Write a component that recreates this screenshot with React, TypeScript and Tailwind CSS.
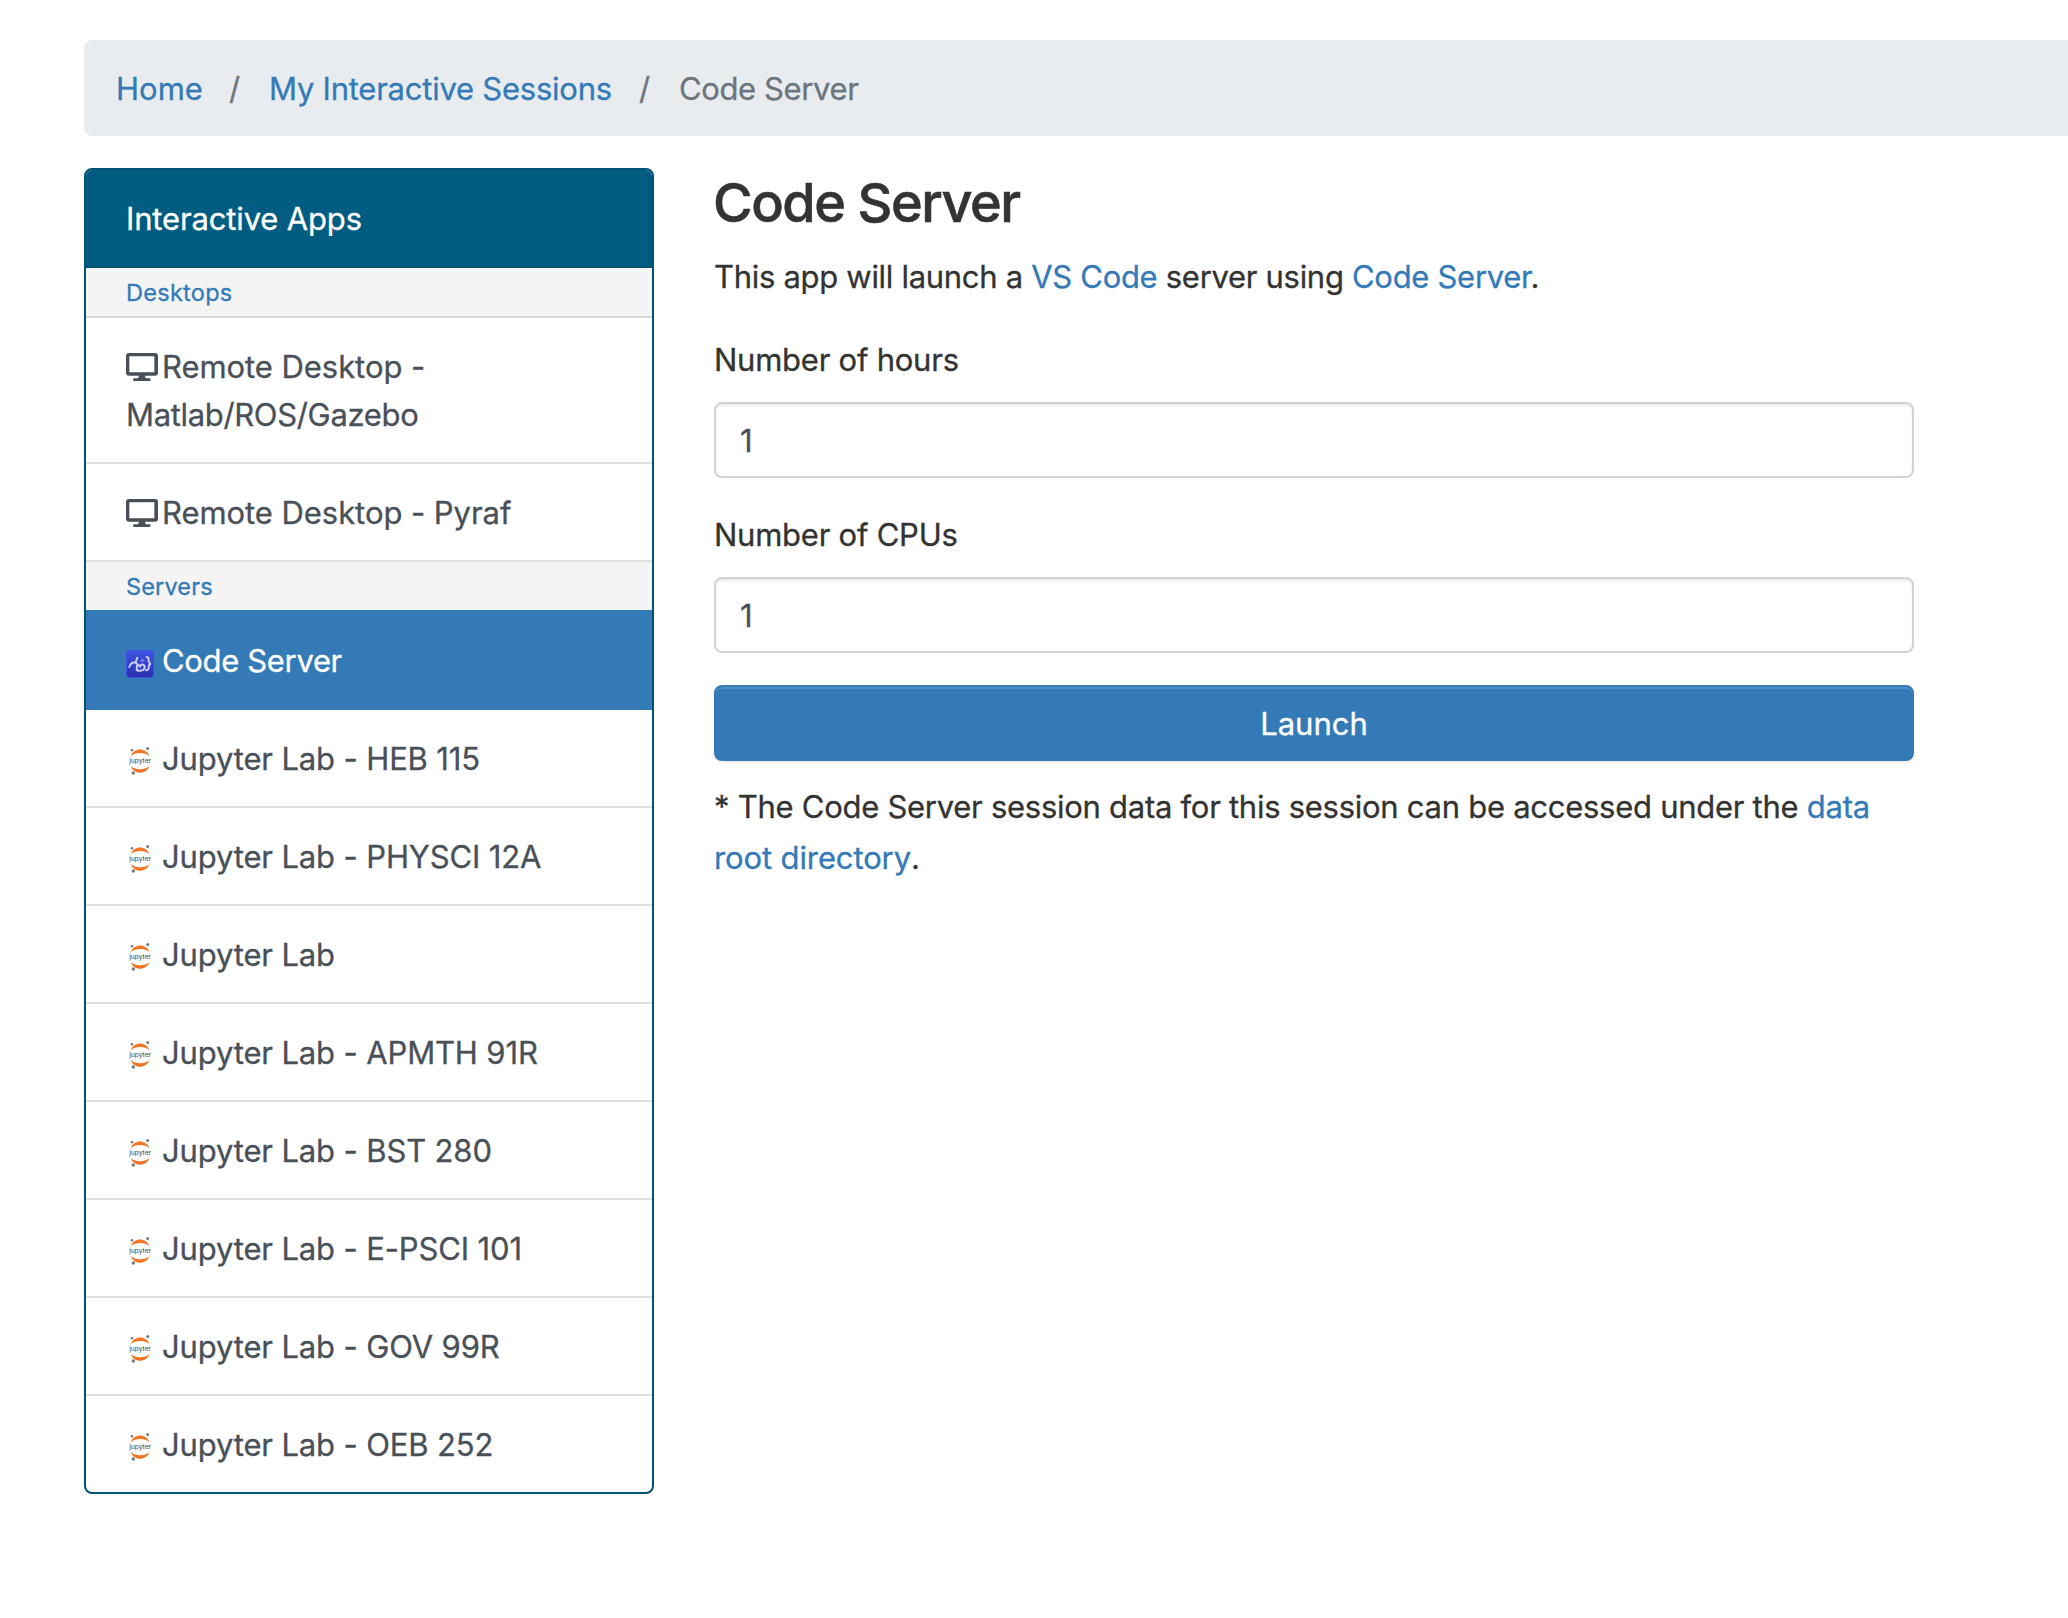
import React from "react";

function MonitorIcon() {
  return (
    <svg viewBox="18 25 96 84" className="mr-1 inline-block h-7 w-8 align-[-3px]" fill="currentColor">
      <path
        fillRule="evenodd"
        d="M27 25H105Q114 25 114 34V84Q114 93 105 93H75L77 101H88Q92 101 92 105Q92 109 88 109H43Q39 109 39 105Q39 101 43 101H54L57 93H27Q18 93 18 84V34Q18 25 27 25ZM28 35V83H103V35Z"
      />
    </svg>
  );
}

function CodeIcon() {
  return (
    <svg viewBox="0 0 84 84" className="h-7 w-7 shrink-0 translate-y-[3px]">
      <defs>
        <linearGradient id="codeBg" x1="0" y1="0" x2="0" y2="1">
          <stop offset="0" stopColor="#3f55e6" />
          <stop offset="0.5" stopColor="#3640cb" />
          <stop offset="1" stopColor="#2c2fae" />
        </linearGradient>
      </defs>
      <rect x="1.5" y="1.5" width="81" height="81" rx="10" fill="url(#codeBg)" stroke="#4552e2" strokeWidth="3" />
      <g fill="none" stroke="#c9ccf5" strokeWidth="6" strokeLinecap="round" strokeLinejoin="round">
        <path d="M10 51C13 41 20 36 29 38L43 50" />
        <path d="M29 37L34 23" />
        <path d="M33 47L32 60C40 64 54 63 56 53C57 44 46 40 41 48" />
        <path d="M62 21C69 21 68 28 68 33C68 38 73 41 73 42C69 44 68 47 68 52C68 59 67 61 60 61" />
      </g>
      <path d="M49 23L52 29L58 31L52 34L49 39L46 34L41 31L46 29Z" fill="#7480e8" />
    </svg>
  );
}

function JupyterIcon() {
  return (
    <svg viewBox="0 0 90 90" className="h-[30px] w-[30px] shrink-0 translate-y-[3px]">
      <g fill="#f37626">
        <path d="M15 28C21 1 63 1 70 28C57 15 28 15 15 28Z" />
        <path d="M15 57C21 84 63 84 70 57C57 70 28 70 15 57Z" />
      </g>
      <g fill="#77787b">
        <circle cx="18" cy="10" r="3.8" />
        <circle cx="65" cy="4.5" r="4.5" />
        <circle cx="22" cy="78" r="5.2" />
      </g>
      <text
        x="42.5"
        y="49"
        textAnchor="middle"
        textLength="66"
        lengthAdjust="spacingAndGlyphs"
        fontSize="20"
        fill="#3c3c3c"
        className="font-['Inter',sans-serif] tracking-normal"
      >
        jupyter
      </text>
    </svg>
  );
}

const labs = [
  "Jupyter Lab - HEB 115",
  "Jupyter Lab - PHYSCI 12A",
  "Jupyter Lab",
  "Jupyter Lab - APMTH 91R",
  "Jupyter Lab - BST 280",
  "Jupyter Lab - E-PSCI 101",
  "Jupyter Lab - GOV 99R",
  "Jupyter Lab - OEB 252",
];

function Field({ label }: { label: string }) {
  return (
    <label className="mb-8 block">
      <span className="block h-[51px] leading-[50px] tracking-[-0.24px]">{label}</span>
      <input
        defaultValue="1"
        className="mt-4 block h-[76px] w-full rounded-lg border-2 border-[#ced4da] bg-white px-6 text-[#495057] shadow-[inset_0_2px_2px_rgba(0,0,0,0.075)] outline-none"
      />
    </label>
  );
}

export default function App() {
  return (
    <div className="min-h-[1618px] w-full overflow-hidden bg-white pl-[84px] pt-10 font-['Inter',sans-serif] text-[31px] leading-[48px] text-[#333] [-webkit-text-stroke-width:0.3px]">
      <nav className="flex h-24 items-center whitespace-nowrap rounded-l-lg bg-[#e9ecef] pl-8 pt-0.5 text-[#6c757d]">
        <a className="w-[113px] text-[#337ab7]">Home</a>
        <span className="w-10">/</span>
        <a className="w-[370px] tracking-[-0.24px] text-[#337ab7]">My Interactive Sessions</a>
        <span className="w-10">/</span>
        <span className="tracking-[-0.38px]">Code Server</span>
      </nav>

      <div className="mt-8 flex items-start">
        <aside className="w-[570px] shrink-0 overflow-hidden rounded-lg border-2 border-[#005273] text-[#495057]">
          <div className="h-[98px] border-b-2 border-[#005273] bg-[#005c81] pl-10 pt-[25px] tracking-[-0.15px] text-white">
            Interactive Apps
          </div>
          <div className="h-[50px] border-b-2 border-[#d7d7d7] bg-[#f4f4f4] pl-10 pt-px text-[23.5px] tracking-[0.28px] text-[#337ab7]">
            Desktops
          </div>
          <div className="h-[146px] border-b-2 border-[#dfdfdf] pl-10 pt-[25px] tracking-[-0.06px]">
            <MonitorIcon />
            Remote Desktop -<span className="block tracking-[-0.34px]">Matlab/ROS/Gazebo</span>
          </div>
          <div className="h-[98px] border-b-2 border-[#dfdfdf] pl-10 pt-[25px] tracking-[-0.06px]">
            <MonitorIcon />
            Remote Desktop - Pyraf
          </div>
          <div className="h-12 bg-[#f4f4f4] pl-10 pt-px text-[23.5px] tracking-[0.15px] text-[#337ab7]">Servers</div>
          <div className="flex h-[100px] items-center gap-2 bg-[#337ab7] pl-10 pt-0.5 tracking-[-0.34px] text-white">
            <CodeIcon />
            Code Server
          </div>
          {labs.map((name) => (
            <div
              key={name}
              className="flex h-[98px] items-center gap-1.5 border-b-2 border-[#dfdfdf] pl-10 pt-0.5 tracking-[-0.14px] last:h-24 last:border-b-0"
            >
              <JupyterIcon />
              {name}
            </div>
          ))}
        </aside>

        <main className="ml-[60px] w-[1200px]">
          <h1 className="-ml-px h-[67px] pt-px text-[54px] font-medium leading-[67px] tracking-[-1.45px] [-webkit-text-stroke-width:0.6px]">
            Code Server
          </h1>
          <p className="mb-[33px] mt-4 leading-[51px] tracking-[-0.3px]">
            This app will launch a <a className="text-[#337ab7]">VS Code</a> server using{" "}
            <a className="text-[#337ab7]">Code Server</a>.
          </p>
          <Field label="Number of hours" />
          <Field label="Number of CPUs" />
          <button className="block h-[76px] w-full rounded-lg border-2 border-[#337ab7] bg-[#337ab7] pt-px text-white shadow-[inset_0_2px_0_rgba(255,255,255,0.15),0_2px_2px_rgba(0,0,0,0.075)]">
            Launch
          </button>
          <p className="mt-5 whitespace-nowrap leading-[51px] tracking-[-0.27px]">
            * The Code Server session data for this session can be accessed under the{" "}
            <a className="text-[#337ab7]">data</a>
            <br />
            <a className="tracking-[-0.12px] text-[#337ab7]">root directory</a>.
          </p>
        </main>
      </div>
    </div>
  );
}
